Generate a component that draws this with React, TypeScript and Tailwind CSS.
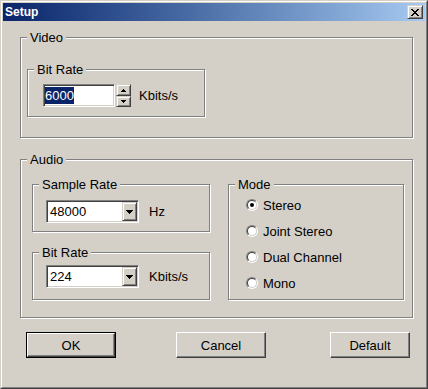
import React from "react";

const FONT = "font-['Liberation_Sans',Arial,sans-serif]";

function Group({
  label,
  className,
  children,
}: {
  label: string;
  className?: string;
  children?: React.ReactNode;
}) {
  return (
    <div
      className={`relative border border-[#808080] shadow-[1px_1px_0_#ffffff,inset_1px_1px_0_#ffffff] ${className ?? ""}`}
    >
      <span className="absolute left-[6px] top-[-8px] bg-[#d4d0c8] pl-[3px] pr-[3px] leading-[15px] text-black whitespace-nowrap">
        {label}
      </span>
      {children}
    </div>
  );
}

function PixelIcon({ rows, color = "#000" }: { rows: string[]; color?: string }) {
  const w = rows[0].length;
  const h = rows.length;
  const rects: React.ReactNode[] = [];
  rows.forEach((r, y) => {
    r.split("").forEach((c, x) => {
      if (c === "X") rects.push(<rect key={`${x}-${y}`} x={x} y={y} width={1} height={1} fill={color} />);
    });
  });
  return (
    <svg width={w} height={h} viewBox={`0 0 ${w} ${h}`} shapeRendering="crispEdges" className="block">
      {rects}
    </svg>
  );
}

const DOWN = ["XXXXXXX", ".XXXXX.", "..XXX..", "...X..."];
const SPIN_UP = ["..X..", ".XXX.", "XXXXX"];
const SPIN_DOWN = ["XXXXX", ".XXX.", "..X.."];
const CLOSE = [
  "XX....XX",
  ".XX..XX.",
  "..XXXX..",
  "...XX...",
  "..XXXX..",
  ".XX..XX.",
  "XX....XX",
];

function SmallRaised({ className, children }: { className?: string; children?: React.ReactNode }) {
  return (
    <div
      className={`flex items-center justify-center bg-[#d4d0c8] border border-t-[#d4d0c8] border-l-[#d4d0c8] border-r-[#404040] border-b-[#404040] shadow-[inset_1px_1px_0_#ffffff,inset_-1px_-1px_0_#808080] ${className ?? ""}`}
    >
      {children}
    </div>
  );
}

function Combo({ value }: { value: string }) {
  return (
    <div className="flex w-[93px] h-[23px] bg-white border border-t-[#808080] border-l-[#808080] border-r-white border-b-white shadow-[inset_1px_1px_0_#404040,inset_-1px_-1px_0_#d4d0c8] p-[1px]">
      <div className="flex-1 flex items-center pl-[2px] leading-[15px]">{value}</div>
      <SmallRaised className="w-[15px] h-full">
        <PixelIcon rows={DOWN} />
      </SmallRaised>
    </div>
  );
}

function Radio({ label, checked }: { label: string; checked?: boolean }) {
  return (
    <div className="flex items-center h-[26px]">
      <div className="w-[12px] h-[12px] rounded-full border border-t-[#808080] border-l-[#808080] border-r-white border-b-white">
        <div className="w-full h-full rounded-full border border-t-[#404040] border-l-[#404040] border-r-[#d4d0c8] border-b-[#d4d0c8] bg-white flex items-center justify-center">
          {checked && <div className="w-[4px] h-[4px] rounded-full bg-black" />}
        </div>
      </div>
      <span className="ml-[5px] leading-[15px]">{label}</span>
    </div>
  );
}

function PushButton({
  label,
  width,
  isDefault,
}: {
  label: string;
  width: string;
  isDefault?: boolean;
}) {
  const inner = (
    <div className="flex-1 flex items-center justify-center bg-[#d4d0c8] border border-t-white border-l-white border-r-[#404040] border-b-[#404040] shadow-[inset_-1px_-1px_0_#808080] leading-[15px]">
      {label}
    </div>
  );
  return (
    <div className={`flex h-[26px] ${width} ${isDefault ? "border border-black" : ""}`}>{inner}</div>
  );
}

export default function App() {
  return (
    <div className={`${FONT} text-[13px] text-black w-[428px] h-[389px] flex flex-col bg-[#d4d0c8] border border-t-[#d4d0c8] border-l-[#d4d0c8] border-r-[#404040] border-b-[#404040]`}>
      <div className="flex-1 flex flex-col border border-t-white border-l-white border-r-[#808080] border-b-[#808080] p-[1px]">
        {/* Title bar */}
        <div className="h-[18px] flex items-center bg-gradient-to-r from-[#0a246a] to-[#a6caf0] pl-[2px] pr-[2px]">
          <span className="flex-1 text-white font-bold text-[12px] leading-[15px]">Setup</span>
          <SmallRaised className="w-[16px] h-[14px]">
            <PixelIcon rows={CLOSE} />
          </SmallRaised>
        </div>

        {/* Body */}
        <div className="flex-1 flex flex-col pl-[17px] pt-[16px]">
          {/* Video */}
          <Group label="Video" className="w-[393px] h-[101px] pl-[6px] pt-[31px]">
            <Group label="Bit Rate" className="w-[178px] h-[48px] pl-[15px] pt-[14px]">
              <div className="flex items-center">
                <div className="w-[72px] h-[23px] bg-white border border-t-[#808080] border-l-[#808080] border-r-white border-b-white shadow-[inset_1px_1px_0_#404040,inset_-1px_-1px_0_#d4d0c8] pl-[1px] py-[2px] flex">
                  <span className="bg-[#0a246a] text-white leading-[17px] h-[17px]">6000</span>
                </div>
                <div className="ml-[1px] w-[15px] h-[23px] flex flex-col">
                  <SmallRaised className="h-[12px]">
                    <PixelIcon rows={SPIN_UP} />
                  </SmallRaised>
                  <SmallRaised className="h-[11px]">
                    <PixelIcon rows={SPIN_DOWN} />
                  </SmallRaised>
                </div>
                <span className="ml-[8px] leading-[15px]">Kbits/s</span>
              </div>
            </Group>
          </Group>

          {/* Audio */}
          <Group label="Audio" className="mt-[21px] w-[393px] h-[159px] pl-[11px] pt-[24px] flex items-start">
            <div className="flex flex-col w-[178px]">
              <Group label="Sample Rate" className="w-[178px] h-[48px] pl-[13px] pt-[15px]">
                <div className="flex items-center">
                  <Combo value="48000" />
                  <span className="ml-[10px] leading-[15px]">Hz</span>
                </div>
              </Group>
              <Group label="Bit Rate" className="mt-[20px] w-[178px] h-[48px] pl-[13px] pt-[12px]">
                <div className="flex items-center">
                  <Combo value="224" />
                  <span className="ml-[10px] leading-[15px]">Kbits/s</span>
                </div>
              </Group>
            </div>
            <Group label="Mode" className="ml-[18px] w-[176px] h-[116px] pl-[17px] pt-[7px] flex flex-col">
              <Radio label="Stereo" checked />
              <Radio label="Joint Stereo" />
              <Radio label="Dual Channel" />
              <Radio label="Mono" />
            </Group>
          </Group>

          {/* Buttons */}
          <div className="mt-[14px] flex">
            <div className="ml-[6px]">
              <PushButton label="OK" width="w-[90px]" isDefault />
            </div>
            <div className="ml-[60px]">
              <PushButton label="Cancel" width="w-[90px]" />
            </div>
            <div className="ml-[64px]">
              <PushButton label="Default" width="w-[80px]" />
            </div>
          </div>
        </div>
      </div>
    </div>
  );
}
